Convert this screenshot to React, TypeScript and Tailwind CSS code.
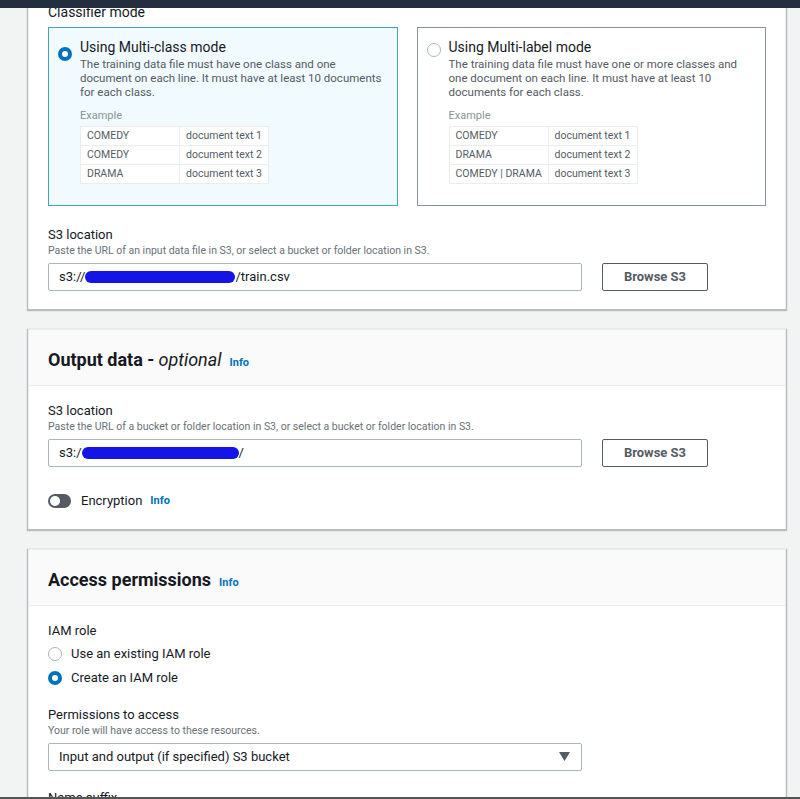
import React from 'react';

const font = { fontFamily: 'Roboto, "Liberation Sans", Arial, sans-serif' };

const Radio = ({ checked }: { checked: boolean }) =>
  checked ? (
    <span className="inline-flex h-[14px] w-[14px] shrink-0 items-center justify-center rounded-full bg-[#0073bb]">
      <span className="h-[6px] w-[6px] rounded-full bg-white" />
    </span>
  ) : (
    <span className="inline-block h-[14px] w-[14px] shrink-0 rounded-full border border-[#aab7b8] bg-white" />
  );

const Info = () => <span className="ml-[8px] text-[11px] font-bold text-[#0073bb]">Info</span>;

const Redacted = ({ w }: { w: number }) => (
  <span className="inline-block h-[12px] rounded-full bg-[#1414e6] align-middle" style={{ width: w }} />
);

type Row = [string, string];

const ExampleTable = ({ rows, firstW }: { rows: Row[]; firstW: number }) => (
  <table className="mt-[3px] border-collapse text-[10.5px] text-[#545b64]">
    <tbody>
      {rows.map(([a, b], i) => (
        <tr key={i} className="h-[19px]">
          <td className="border border-[#eaeded] bg-white pl-[6px]" style={{ width: firstW }}>
            {a}
          </td>
          <td className="w-[89px] border border-[#eaeded] bg-white pl-[6px]">{b}</td>
        </tr>
      ))}
    </tbody>
  </table>
);

const ModeTile = ({
  checked,
  title,
  lines,
  rows,
}: {
  checked: boolean;
  title: string;
  lines: string[];
  rows: Row[];
}) => (
  <div
    className={`h-[179px] border px-[9px] pt-[11px] ${
      checked ? 'border-[#44a5b8] bg-[#f1faff]' : 'border-[#879596] bg-white'
    }`}
  >
    <div className="flex gap-[8px]">
      <div className="pt-[1px]">
        <Radio checked={checked} />
      </div>
      <div>
        <div className="text-[14px] leading-[16px] text-[#16191f]">{title}</div>
        <div className="mt-[2px] text-[11.5px] leading-[14px] text-[#545b64]">
          {lines.map((l) => (
            <div key={l}>{l}</div>
          ))}
        </div>
        <div className="mt-[10px] text-[11px] leading-[14px] text-[#879596]">Example</div>
        <ExampleTable rows={rows} firstW={99} />
      </div>
    </div>
  </div>
);

const S3Field = ({ desc, children }: { desc: string; children: React.ReactNode }) => (
  <div>
    <div className="text-[13px] leading-[16px] text-[#16191f]">S3 location</div>
    <div className="mt-[1px] text-[10.5px] leading-[14px] text-[#687078]">{desc}</div>
    <div className="mt-[5px] flex items-center gap-[20px]">
      <div className="flex h-[28px] w-[534px] items-center rounded-[2px] border border-[#aab7b8] bg-white pl-[10px] text-[13px] text-[#16191f]">
        {children}
      </div>
      <button className="h-[28px] w-[106px] rounded-[2px] border border-[#545b64] bg-white text-[13px] font-bold text-[#545b64]">
        Browse S3
      </button>
    </div>
  </div>
);

const CardHeader = ({ children }: { children: React.ReactNode }) => (
  <div className="flex h-[56px] items-baseline border-b border-[#eaeded] bg-[#fafafa] px-[19px] pt-[16px]">
    {children}
  </div>
);

export default function App() {
  return (
    <div className="flex h-[799px] w-[800px] flex-col overflow-hidden bg-[#f2f3f3]" style={font}>
      <div className="relative z-10 h-[8px] shrink-0 bg-[#232f3e]" />
      <div className="flex-1 overflow-hidden pl-[28px] pr-[14px]">
        {/* Classifier card */}
        <div className="-mt-[5px] border-x border-[#eaeded] bg-white px-[19px] pb-[18px] shadow-[0_1px_1px_1px_rgba(0,28,36,0.25)]">
          <div className="text-[14px] leading-[18px] text-[#16191f]">Classifier mode</div>
          <div className="mt-[6px] grid grid-cols-2 gap-[19px]">
            <ModeTile
              checked
              title="Using Multi-class mode"
              lines={[
                'The training data file must have one class and one',
                'document on each line. It must have at least 10 documents',
                'for each class.',
              ]}
              rows={[
                ['COMEDY', 'document text 1'],
                ['COMEDY', 'document text 2'],
                ['DRAMA', 'document text 3'],
              ]}
            />
            <ModeTile
              checked={false}
              title="Using Multi-label mode"
              lines={[
                'The training data file must have one or more classes and',
                'one document on each line. It must have at least 10',
                'documents for each class.',
              ]}
              rows={[
                ['COMEDY', 'document text 1'],
                ['DRAMA', 'document text 2'],
                ['COMEDY | DRAMA', 'document text 3'],
              ]}
            />
          </div>
          <div className="mt-[21px]">
            <S3Field desc="Paste the URL of an input data file in S3, or select a bucket or folder location in S3.">
              <span>s3://</span>
              <Redacted w={150} />
              <span>/train.csv</span>
            </S3Field>
          </div>
        </div>

        {/* Output data card */}
        <div className="mt-[20px] border-x border-t border-[#eaeded] bg-white shadow-[0_1px_1px_1px_rgba(0,28,36,0.25)]">
          <CardHeader>
            <span className="text-[18px] font-bold text-[#16191f]">Output data - </span>
            <span className="ml-[4px] text-[18px] italic text-[#16191f]">optional</span>
            <Info />
          </CardHeader>
          <div className="px-[19px] pb-[18px] pt-[17px]">
            <S3Field desc="Paste the URL of a bucket or folder location in S3, or select a bucket or folder location in S3.">
              <span>s3:/</span>
              <Redacted w={157} />
              <span>/</span>
            </S3Field>
            <div className="mt-[24px] flex items-center">
              <span className="flex h-[14px] w-[23px] items-center rounded-full bg-[#545b64] pl-[2px]">
                <span className="h-[10px] w-[10px] rounded-full bg-white" />
              </span>
              <span className="ml-[10px] text-[13px] text-[#16191f]">Encryption</span>
              <Info />
            </div>
          </div>
        </div>

        {/* Access permissions card */}
        <div className="mt-[20px] border-x border-t border-[#eaeded] bg-white shadow-[0_1px_1px_1px_rgba(0,28,36,0.25)]">
          <CardHeader>
            <span className="text-[18px] font-bold text-[#16191f]">Access permissions</span>
            <Info />
          </CardHeader>
          <div className="px-[19px] pt-[16px]">
            <div className="text-[13px] leading-[18px] text-[#16191f]">IAM role</div>
            <div className="mt-[5px] flex items-center gap-[9px] text-[13px] leading-[18px] text-[#16191f]">
              <Radio checked={false} />
              <span>Use an existing IAM role</span>
            </div>
            <div className="mt-[6px] flex items-center gap-[9px] text-[13px] leading-[18px] text-[#16191f]">
              <Radio checked />
              <span>Create an IAM role</span>
            </div>
            <div className="mt-[20px] text-[13px] leading-[16px] text-[#16191f]">Permissions to access</div>
            <div className="mt-[1px] text-[10.5px] leading-[14px] text-[#687078]">
              Your role will have access to these resources.
            </div>
            <div className="mt-[5px] flex h-[28px] w-[534px] items-center justify-between rounded-[2px] border border-[#aab7b8] bg-white pl-[10px] pr-[11px] text-[13px] text-[#16191f]">
              <span>Input and output (if specified) S3 bucket</span>
              <svg width="11" height="9" viewBox="0 0 11 9">
                <path d="M0 0 H11 L5.5 9 Z" fill="#545b64" />
              </svg>
            </div>
            <div className="mt-[19px] text-[13px] leading-[16px] text-[#16191f]">Name suffix</div>
            <div className="h-[40px]" />
          </div>
        </div>
      </div>
      <div className="relative z-10 -mt-[2px] h-[2px] shrink-0 bg-[#545454]" />
    </div>
  );
}
